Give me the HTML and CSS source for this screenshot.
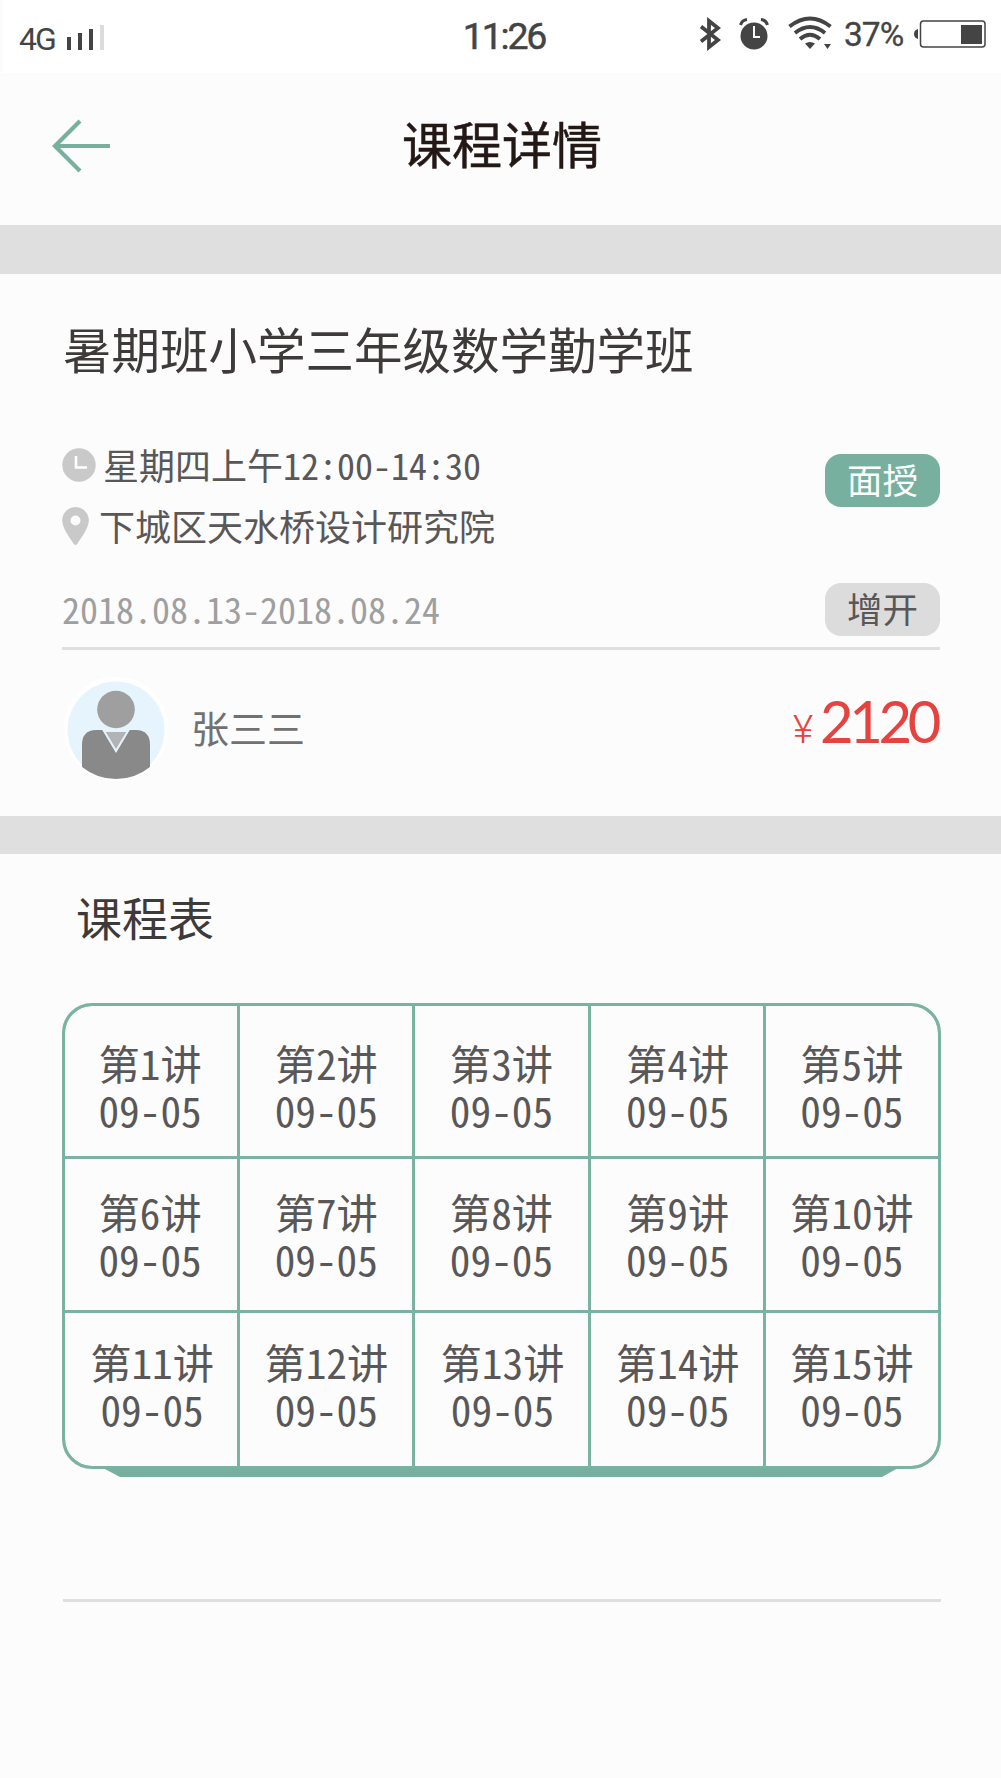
FILE: index.html
```html
<!DOCTYPE html>
<html lang="zh-CN">
<head>
<meta charset="UTF-8">
<title>课程详情</title>
<link rel="stylesheet" href="styles.css">
</head>
<body>
<header class="status">
  <div class="status-left">
    <span class="network">4G</span>
    <svg class="signal" width="38" height="26" viewBox="0 0 38 26"><path fill="#444" d="M0 12h4v13H0zM11 8h4v17h-4zM22 4h4v21h-4z"/><path fill="#dcdcdc" d="M33 0h4v25h-4z"/></svg>
  </div>
  <span class="time">11:26</span>
  <div class="status-right">
    <svg class="bluetooth" width="22" height="36" viewBox="0 0 22 36"><path d="M2 10.500L19 24 10 31V5l9 7L2 25.500" fill="none" stroke="#444" stroke-width="3.800"/></svg>
    <svg class="alarm" width="30" height="32" viewBox="0 0 30 32"><circle cx="15" cy="18" r="13.500" fill="#444"/><path d="M15 8v11h6" fill="none" stroke="#fff" stroke-width="2"/><path d="M1.500 7Q3 2 8 1.500M28.500 7Q27 2 22 1.500" fill="none" stroke="#444" stroke-width="3"/></svg>
    <svg class="wifi" width="44" height="34" viewBox="0 0 44 34"><path d="M1.500 10.500Q22-5.500 42.500 10.500M7 17Q22 5 37 17M12 23Q22 14.500 32 23" fill="none" stroke="#444" stroke-width="3.900"/><path d="M17 27.500q5-3 10 0L22 33zM36 28h7l-3.500 5z" fill="#444"/></svg>
    <span class="percent">37%</span>
    <svg class="battery" width="72" height="28" viewBox="0 0 72 28"><path d="M4 9v10Q0 18 0 14T4 9z" fill="#444"/><rect x="6.500" y="1" width="64.500" height="26" rx="3" fill="#fff" stroke="#444" stroke-width="1.500"/><path d="M47 5h21v19H47z" fill="#444"/></svg>
  </div>
</header>

<nav class="titlebar">
  <svg class="back" width="60" height="54" viewBox="0 0 60 54"><path d="M58 27H4M28 2L3 27l25 25" fill="none" stroke="#77b09e" stroke-width="4.200"/></svg>
  <h1 class="page-title">课程详情</h1>
</nav>

<main>
  <section class="course">
    <h2 class="course-name">暑期班小学三年级数学勤学班</h2>
    <div class="info">
      <div class="info-text">
        <div class="row row-time">
          <svg width="34" height="34" viewBox="0 0 34 34"><circle cx="17" cy="17" r="16.700" fill="#c9c9c9"/><path d="M14 8v11.500h11" fill="none" stroke="#fff" stroke-width="2.600"/></svg>
          <span>星期四上午12:00-14:30</span>
        </div>
        <div class="row row-place">
          <svg width="27" height="38" viewBox="0 0 27 38"><path fill="#c9c9c9" fill-rule="evenodd" d="M13.500 0A13.300 13.300 0 0 0 .2 13.300C.2 21 7 29.500 11.800 37q1.700 2 3.400 0C20 29.500 26.800 21 26.800 13.300A13.300 13.300 0 0 0 13.500 0zm0 8.500a5 5 0 1 1 0 10 5 5 0 0 1 0-10z"/></svg>
          <span>下城区天水桥设计研究院</span>
        </div>
        <div class="dates">2018.08.13-2018.08.24</div>
      </div>
      <div class="badges">
        <span class="badge badge-green">面授</span>
        <span class="badge badge-grey">增开</span>
      </div>
    </div>
    <div class="teacher">
      <svg class="avatar" width="106" height="106" viewBox="0 0 106 106">
        <circle cx="53" cy="52" r="52.500" fill="#fff"/>
        <circle cx="53" cy="53" r="48.500" fill="#e6f5fd"/>
        <circle cx="53" cy="32.500" r="18.800" fill="#9f9f9f"/>
        <path d="M19 67.500Q19 53.500 33 53H73Q87 53.500 87 67.500V90Q72 102 53 102T19 90z" fill="#898989"/>
        <path d="M41 54h24L53 74z" fill="#b3b3b5" stroke="#e6f5fd" stroke-width="2"/>
      </svg>
      <span class="teacher-name">张三三</span>
      <span class="price"><span class="yen">¥</span><span class="amount">2120</span></span>
    </div>
  </section>

  <section class="schedule">
    <h2 class="schedule-title">课程表</h2>
    <div class="grid">
      <div class="lesson">第1讲<br>09-05</div>
      <div class="lesson">第2讲<br>09-05</div>
      <div class="lesson">第3讲<br>09-05</div>
      <div class="lesson nudge">第4讲<br>09-05</div>
      <div class="lesson">第5讲<br>09-05</div>
      <div class="lesson">第6讲<br>09-05</div>
      <div class="lesson">第7讲<br>09-05</div>
      <div class="lesson">第8讲<br>09-05</div>
      <div class="lesson nudge">第9讲<br>09-05</div>
      <div class="lesson">第10讲<br>09-05</div>
      <div class="lesson nudge">第11讲<br>09-05</div>
      <div class="lesson">第12讲<br>09-05</div>
      <div class="lesson nudge">第13讲<br>09-05</div>
      <div class="lesson nudge">第14讲<br>09-05</div>
      <div class="lesson">第15讲<br>09-05</div>
    </div>
    <div class="grid-base"></div>
    <hr class="divider">
  </section>
</main>
</body>
</html>
```
FILE: styles.css
```css
* { box-sizing: border-box; }

body {
  margin: 0;
  min-height: 1778px;
  background: #fcfcfc;
  color: #595757;
  font-family: "Noto Sans CJK SC", sans-serif;
  font-feature-settings: "hwid";
}

h1, h2 { margin: 0; font-weight: 400; white-space: nowrap; }
svg { display: block; flex: none; }

.status {
  display: grid;
  grid-template-columns: 1fr auto 1fr;
  height: 73px;
  margin-left: 3px;
  background: #fff;
  color: #444;
  font-family: Roboto, sans-serif;
  font-feature-settings: normal;
}
.status-left { display: flex; padding-left: 16px; }
.network { width: 48px; margin-top: 21px; font-size: 32px; line-height: 36px; letter-spacing: -2px; }
.signal { margin-top: 25px; }
.time { margin-top: 14px; padding-left: 4px; font-size: 37.5px; line-height: 44px; letter-spacing: -2.2px; -webkit-text-stroke: 0.5px #444; }
.status-right { display: flex; justify-content: flex-end; padding-right: 15px; }
.bluetooth { margin: 16px 18px 0 0; }
.alarm { margin: 18px 19px 0 0; }
.wifi { margin: 16px 12px 0 0; }
.percent { width: 70px; margin-top: 16px; font-size: 33.5px; line-height: 38px; letter-spacing: -1px; -webkit-text-stroke: 0.3px #444; }
.battery { margin-top: 20px; }

.titlebar {
  display: grid;
  grid-template-columns: 1fr auto 1fr;
  height: 152px;
  padding-left: 52px;
  padding-right: 49px;
}
.back { margin-top: 46px; }
.page-title { margin-top: 33px; font-size: 50px; line-height: 72px; color: #231815; -webkit-text-stroke: 0.5px #231815; }

.course {
  height: 629px;
  padding: 0 61px 0 62px;
  border-top: 49px solid #dfdfdf;
  border-bottom: 38px solid #dfdfdf;
}
.course-name { height: 142px; padding: 39px 0 0 1px; font-size: 48.5px; line-height: 70px; color: #3e3a39; }
.info { display: flex; justify-content: space-between; height: 234px; border-bottom: 3px solid #dfdfdf; font-size: 36px; line-height: 52px; white-space: nowrap; }
.row { display: flex; align-items: center; }
.row-time { height: 64px; padding-top: 34px; gap: 7px; }
.row-time span { margin-top: -3px; }
.row-place { height: 58px; margin-top: 17px; gap: 10px; }
.row-place span { margin-top: -3px; }
.dates { margin-top: 27px; color: #9f9f9f; }
.badges { display: flex; flex-direction: column; gap: 76px; padding-top: 38px; }
.badge { width: 115px; height: 53px; border-radius: 16px; text-align: center; font-size: 35.5px; line-height: 49px; }
.badge-green { background: #77b09e; color: #fff; }
.badge-grey { background: #dcdcdc; }

.teacher { display: flex; align-items: flex-start; }
.avatar { margin: 27px 0 0 1px; }
.teacher-name { margin: 49px 0 0 22px; font-size: 38px; line-height: 56px; color: #727171; }
.price { display: flex; align-items: baseline; margin: 36px 0 0 auto; color: #e5433f; }
.yen { margin-right: 7px; font-family: Roboto, sans-serif; font-size: 39px; font-weight: 300; }
.amount { margin-right: 3px; font-family: Lato, sans-serif; font-size: 58px; line-height: 70px; letter-spacing: -4.4px; font-feature-settings: normal; }

.schedule { padding: 0 60px 0 62px; }
.schedule-title { height: 149px; padding: 28px 0 0 14px; font-size: 46px; line-height: 68px; color: #3e3a39; }
.grid {
  display: grid;
  grid-template-columns: repeat(5, 1fr);
  grid-template-rows: 150px 151px 153px;
  gap: 3px;
  overflow: hidden;
  border: 3px solid #7bb3a2;
  border-radius: 30px;
  background: #7bb3a2;
}
.lesson { padding-top: 33px; background: #fcfcfc; text-align: center; font-size: 41.3px; line-height: 47px; white-space: nowrap; }
.lesson:nth-child(n + 6) { padding-top: 29px; }
.lesson:nth-child(n + 11) { padding-top: 25px; }
.lesson:first-child { border-top-left-radius: 27px; }
.lesson:nth-child(5) { border-top-right-radius: 27px; }
.lesson:nth-child(11) { border-bottom-left-radius: 27px; }
.lesson:last-child { border-bottom-right-radius: 27px; }
.lesson:nth-child(5n + 1):not(.nudge) { padding-right: 2px; }
.nudge { padding-left: 2px; }
.grid-base { height: 9px; margin: -1px 43px 0 41px; background: #77b09e; clip-path: polygon(0 0, 100% 0, calc(100% - 16px) 100%, 17px 100%); }
.divider { height: 3px; margin: 122px 0 0 1px; border: 0; background: #dfdfdf; }
```
